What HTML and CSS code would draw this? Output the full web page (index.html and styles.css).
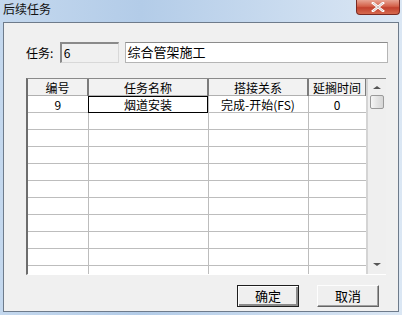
FILE: index.html
```html
<!DOCTYPE html>
<html lang="zh-CN">
<head>
    <meta charset="UTF-8">
    <title>后续任务</title>
    <link rel="stylesheet" href="styles.css">
</head>
<body>
    <div class="window">
        <div class="title-bar">
            <span class="title">后续任务</span>
            <button class="close-btn" type="button">
                <svg width="14" height="10" viewBox="0 0 14 10">
                    <path d="M2 1 L12 9 M12 1 L2 9" stroke="#fff" stroke-width="2.6" stroke-linecap="square"/>
                    <path d="M2 1 L12 9 M12 1 L2 9" stroke="#5a2a26" stroke-width="0.6" opacity="0.5"/>
                </svg>
            </button>
        </div>

        <div class="client">
            <!-- task name row -->
            <div class="task-row">
                <label class="task-label">任务:</label>
                <div class="box box-id">6</div>
                <div class="box box-name">综合管架施工</div>
            </div>

            <!-- successor grid -->
            <div class="grid">
                <div class="grid-body">
                    <table class="grid-table">
                        <colgroup>
                            <col class="c-no">
                            <col class="c-name">
                            <col class="c-rel">
                            <col class="c-lag">
                        </colgroup>
                        <thead>
                            <tr>
                                <th>编号</th>
                                <th>任务名称</th>
                                <th>搭接关系</th>
                                <th>延搁时间</th>
                            </tr>
                        </thead>
                        <tbody>
                            <tr>
                                <td>9</td>
                                <td class="focus">烟道安装</td>
                                <td>完成-开始(FS)</td>
                                <td>0</td>
                            </tr>
                            <tr><td></td><td></td><td></td><td></td></tr>
                            <tr><td></td><td></td><td></td><td></td></tr>
                            <tr><td></td><td></td><td></td><td></td></tr>
                            <tr><td></td><td></td><td></td><td></td></tr>
                            <tr><td></td><td></td><td></td><td></td></tr>
                            <tr><td></td><td></td><td></td><td></td></tr>
                            <tr><td></td><td></td><td></td><td></td></tr>
                            <tr><td></td><td></td><td></td><td></td></tr>
                            <tr><td></td><td></td><td></td><td></td></tr>
                            <tr><td></td><td></td><td></td><td></td></tr>
                        </tbody>
                    </table>
                </div>
                <div class="scrollbar">
                    <div class="arrow arrow-up"></div>
                    <div class="thumb"></div>
                    <div class="track"></div>
                    <div class="arrow arrow-down"></div>
                </div>
            </div>

            <div class="buttons">
                <button class="btn btn-default" type="button">确定</button>
                <button class="btn" type="button">取消</button>
            </div>
        </div>
    </div>
</body>
</html>
```

FILE: styles.css
```css
body {
    margin: 0;
    font-family: "Noto Sans CJK SC", "DejaVu Sans", sans-serif;
    font-size: 12px;
    color: #000;
}
.window {
    width: 402px;
    height: 315px;
    box-sizing: border-box;
    background: linear-gradient(90deg, #c4d8ee 0%, #b3cce8 35%, #c9dbef 70%, #dbe7f4 100%);
    display: flex;
    flex-direction: column;
    padding: 0 3px 3px 3px;
}
.title-bar {
    height: 22px;
    display: flex;
    align-items: flex-start;
    justify-content: space-between;
}
.title {
    font-size: 12px;
    line-height: 16px;
    padding-top: 1px;
    color: #111;
}
.close-btn {
    width: 44px;
    height: 15px;
    margin-right: -1px;
    padding: 0;
    border: 1px solid #7a2a22;
    border-top: none;
    border-radius: 0 0 4px 4px;
    background: linear-gradient(180deg, #e8a493 0%, #d4614a 45%, #c2412e 55%, #d66a4f 100%);
    display: flex;
    align-items: center;
    justify-content: center;
}
.client {
    flex: 1;
    background: #f0f0f0;
    border: 1px solid #6e7b8b;
    padding: 19px 10px 0 22px;
    display: flex;
    flex-direction: column;
}
.task-row {
    display: flex;
    align-items: center;
    height: 21px;
}
.task-label {
    width: 34px;
    font-size: 12px;
}
.box {
    height: 21px;
    box-sizing: border-box;
    line-height: 17px;
    padding-left: 2px;
}
.box-id {
    width: 59px;
    background: #f0f0f0;
    border-top: 2px solid #8a8a8a;
    border-left: 2px solid #8a8a8a;
    border-right: 1px solid #d8d8d8;
    border-bottom: 1px solid #d8d8d8;
    font-size: 12px;
}
.box-name {
    width: 265px;
    margin-left: 6px;
    background: #fff;
    border: 1px solid #b5b5b5;
    border-top-color: #8c8c8c;
    font-size: 13px;
    line-height: 18px;
}
.grid {
    margin-top: 15px;
    width: 360px;
    height: 197px;
    box-sizing: border-box;
    border-left: 2px solid #6d6d6d;
    border-top: 1px solid #8a8a8a;
    border-bottom: 1px solid #ffffff;
    display: flex;
    background: #fff;
}
.grid-body {
    flex: 1;
    overflow: hidden;
    border-right: 2px solid #d4d4d4;
}
.grid-table {
    border-collapse: collapse;
    table-layout: fixed;
    width: 338px;
}
.c-no { width: 60px; }
.c-name { width: 120px; }
.c-rel { width: 100px; }
.c-lag { width: 58px; }
.grid-table th,
.grid-table td {
    height: 16px;
    padding: 0;
    text-align: center;
    font-weight: normal;
    font-size: 12px;
    line-height: 15px;
    border-right: 1px solid #bdbdbd;
    border-bottom: 1px solid #bdbdbd;
    white-space: nowrap;
}
.grid-table th {
    background: #f2f2f2;
    border-right: 2px solid #7c7c7c;
    border-bottom: 1px solid #b0b0b0;
}
.grid-table td.focus {
    outline: 1px solid #000;
    outline-offset: -1px;
}
.scrollbar {
    width: 18px;
    background: #efefef;
    display: flex;
    flex-direction: column;
    align-items: center;
}
.arrow {
    width: 0;
    height: 0;
    border-left: 4px solid transparent;
    border-right: 4px solid transparent;
}
.arrow-up {
    margin-top: 7px;
    border-bottom: 3px solid #555;
}
.arrow-down {
    margin-bottom: 8px;
    border-top: 3px solid #555;
}
.thumb {
    margin-top: 6px;
    width: 14px;
    height: 14px;
    box-sizing: border-box;
    border: 1px solid #9a9a9a;
    border-radius: 2px;
    background: linear-gradient(90deg, #f6f6f6 0%, #e4e4e4 50%, #d6d6d6 100%);
}
.track {
    flex: 1;
}
.buttons {
    display: flex;
    justify-content: flex-end;
    gap: 18px;
    margin-top: 10px;
    padding-right: 9px;
}
.btn {
    width: 62px;
    height: 22px;
    padding: 0;
    font-family: "Noto Sans CJK SC", sans-serif;
    font-size: 13px;
    line-height: 18px;
    background: #efefef;
    border: 1px solid;
    border-color: #fdfdfd #646464 #646464 #fdfdfd;
    box-shadow: inset -1px -1px 0 #a0a0a0;
}
.btn-default {
    border: 1px solid #1e1e1e;
    box-shadow: inset 1px 1px 0 #fdfdfd, inset -2px -2px 0 #8a8a8a;
}
```
